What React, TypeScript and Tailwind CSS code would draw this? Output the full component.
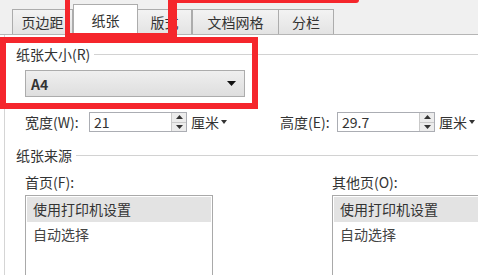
import React from 'react';

function Tab({ label, className }: { label: string; className: string }) {
  return (
    <div
      className={`flex h-[25px] items-center justify-center border border-b-0 border-[#acacac] bg-gradient-to-b from-[#f3f3f3] to-[#e3e3e3] text-[#333] ${className}`}
    >
      {label}
    </div>
  );
}

function GroupHeader({ label }: { label: string }) {
  return (
    <div className="flex h-[16px] items-center gap-[4px] leading-none">
      <span>{label}</span>
      <div className="h-px flex-1 bg-[#d2d2d2]" />
    </div>
  );
}

function Spinner() {
  return (
    <div className="flex h-[18px] w-[15px] flex-col border-l border-[#c9c9c9]">
      <div className="flex flex-1 items-center justify-center border-b border-[#c9c9c9] bg-[#ececec]">
        <svg width="7" height="4" viewBox="0 0 7 4"><path d="M0 4 L3.5 0 L7 4 Z" fill="#333" /></svg>
      </div>
      <div className="flex flex-1 items-center justify-center bg-[#ececec]">
        <svg width="7" height="4" viewBox="0 0 7 4"><path d="M0 0 L3.5 4 L7 0 Z" fill="#333" /></svg>
      </div>
    </div>
  );
}

function NumberField({ value }: { value: string }) {
  return (
    <div className="flex h-[20px] w-[98px] shrink-0 items-center justify-between border border-[#abadb3] bg-white pl-[4px]">
      <span className="leading-none">{value}</span>
      <Spinner />
    </div>
  );
}

function Unit() {
  return (
    <div className="flex items-center gap-[2px] leading-none">
      <span>厘米</span>
      <svg width="6" height="4" viewBox="0 0 6 4"><path d="M0 0 L3 4 L6 0 Z" fill="#333" /></svg>
    </div>
  );
}

function SourceList() {
  return (
    <div className="mt-[4px] h-[100px] border border-[#a9a9a9] bg-white p-px">
      <div className="flex h-[25px] items-center bg-[#e3e3e3] pl-[6px]">使用打印机设置</div>
      <div className="flex h-[25px] items-center pl-[6px] text-[#444]">自动选择</div>
    </div>
  );
}

export default function App() {
  return (
    <div className="relative h-[275px] w-[478px] overflow-hidden bg-white font-['Microsoft_YaHei','Noto_Sans_CJK_SC',sans-serif] text-[14px] text-[#333]">
      {/* tab strip */}
      <div className="flex h-[35px] items-end border-b border-[#b5b5b5] bg-[#f0f0f0] pl-[12px]">
        <Tab label="页边距" className="w-[61px]" />
        <div className="-mb-px flex h-[31px] w-[65px] items-center justify-center border border-b-0 border-[#acacac] bg-white">
          纸张
        </div>
        <Tab label="版式" className="w-[54px] border-l-0" />
        <Tab label="文档网格" className="w-[87px]" />
        <Tab label="分栏" className="w-[55px] border-l-0" />
      </div>

      {/* page body */}
      <div className="ml-[4px] h-[240px] border-l border-[#d5d5d5] pl-[11px] pt-[11px]">
        <GroupHeader label="纸张大小(R)" />
        <div className="ml-[9px]">
          <div className="mt-[8px] flex h-[27px] w-[220px] items-center justify-between border border-[#acacac] bg-gradient-to-b from-[#efefef] to-[#dedede] pl-[5px] pr-[8px]">
            <span className="font-bold leading-none">A4</span>
            <svg width="9" height="5" viewBox="0 0 9 5"><path d="M0 0 L4.5 5 L9 0 Z" fill="#111" /></svg>
          </div>

          <div className="mt-[15px] flex h-[20px] items-center whitespace-nowrap">
            <span className="w-[64px] shrink-0 leading-none">宽度(W):</span>
            <NumberField value="21" />
            <div className="ml-[4px] w-[89px] shrink-0">
              <Unit />
            </div>
            <span className="w-[57px] shrink-0 leading-none">高度(E):</span>
            <NumberField value="29.7" />
            <div className="ml-[4px] shrink-0">
              <Unit />
            </div>
          </div>
        </div>

        <div className="mt-[15px]">
          <GroupHeader label="纸张来源" />
        </div>

        <div className="ml-[9px] mt-[12px] flex">
          <div className="w-[188px] shrink-0">
            <div className="h-[16px] leading-none">首页(F):</div>
            <SourceList />
          </div>
          <div className="ml-[119px] w-[160px] shrink-0">
            <div className="h-[16px] leading-none">其他页(O):</div>
            <SourceList />
          </div>
        </div>
      </div>

      {/* red annotation boxes */}
      <div className="pointer-events-none absolute left-[65px] top-[-6px] h-[44px] w-[112px] border-[5px] border-r-[9px] border-[#f5262c]" />
      <div className="pointer-events-none absolute left-[173px] top-[-40px] h-[43px] w-[186px] rounded-[3px] border-[4px] border-[#f5262c]" />
      <div className="pointer-events-none absolute left-0 top-[37px] h-[72px] w-[258px] border-[6px] border-[#f5262c]" />
    </div>
  );
}
